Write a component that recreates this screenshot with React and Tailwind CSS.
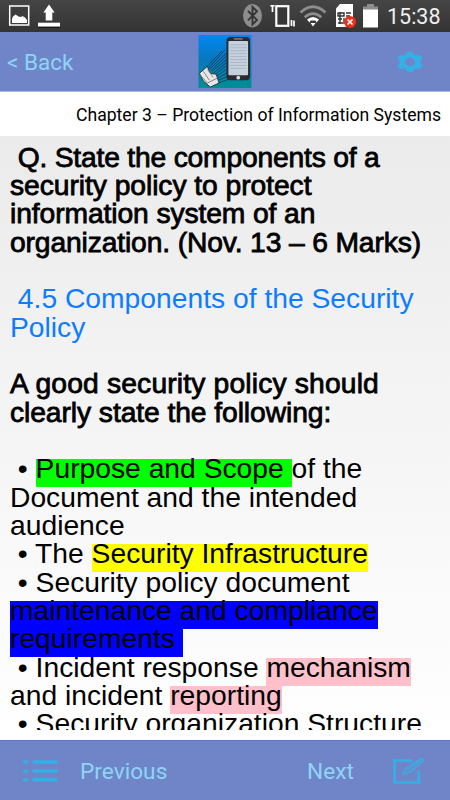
import React from 'react';
import clsx from 'clsx';

const StatusBar = () => (
  <div className="flex h-8 shrink-0 bg-gradient-to-b from-[#454545] to-[#343434]">
    <svg viewBox="0 0 385 32" className="h-8 w-[385px] shrink-0">
      {/* gallery */}
      <rect x="9.7" y="6" width="19" height="19" fill="#3d3d3d" stroke="#fff" strokeWidth="1.5" />
      <path d="M12 23v-4l1-2.500 2.500-2 3 2 2.500.5 1.500-1 2.500 1.500 2 2.500V23z" fill="#fff" />
      {/* upload */}
      <path d="M49 4.500l5.600 8h-2.300v8h-6.600v-8h-2.300z" fill="#fff" />
      <rect x="38" y="22.700" width="22" height="4" fill="#fff" />
      <path d="M38 27.300h22" stroke="#111" />
      {/* bluetooth */}
      <ellipse cx="252.500" cy="15.700" rx="9.500" ry="11.700" fill="#8d8d8d" />
      <path d="M248 11l9 9-4.500 4.500V7l4.500 4.300-9 9" fill="none" stroke="#353535" strokeWidth="1.900" />
      {/* vibrate */}
      <rect x="276.300" y="6.200" width="12" height="19.600" fill="#373737" stroke="#fff" strokeWidth="2.200" />
      <path d="M270.500 5.800h4M272.500 5.500v6.500M291.500 20v6M294 20.500v6" fill="none" stroke="#fff" strokeWidth="1.700" />
      {/* wifi */}
      <path d="M300.500 12.500q12.500-11.500 25 0M304.700 17.300q8.300-7.500 16.600 0" fill="none" stroke="#8d8d8d" strokeWidth="2.700" />
      <path d="M307 19.500q6-5 12 0l-2.500 3-1-2h-5l-1 2z" fill="#fff" />
      <path d="M310.500 23h5l-2.500 3.500z" fill="#fff" />
      {/* sim */}
      <path d="M336 8.500L340 4h13v23h-17z" fill="#fff" />
      <path d="M338 13h6v3h-6zM346 13h5M346 16h4M338 19h4M338 23h5M344 18v6M340 12v12" fill="none" stroke="#333" strokeWidth="1.400" />
      <circle cx="350" cy="22" r="6" fill="#ee3018" />
      <path d="M347.500 19.500l5 5M352.500 19.500l-5 5" stroke="#fff" strokeWidth="1.700" />
      {/* battery */}
      <path d="M363 10V6.500h4V4h7v2.500h4V10z" fill="#8d8d8d" />
      <rect x="363" y="9.500" width="15" height="18" fill="#fff" />
    </svg>
    <span className="ml-[2px] text-[21.500px] leading-[34px] text-[#f0f0f0]">15:38</span>
  </div>
);

const AppLogo = () => (
  <svg viewBox="0 0 54 54" className="h-[53px] w-[54px]">
    <defs>
      <linearGradient id="sky" x1="0" y1="0" x2="0" y2="1">
        <stop offset="0" stopColor="#0088f5" />
        <stop offset="0.450" stopColor="#0878bd" />
        <stop offset="1" stopColor="#008f91" />
      </linearGradient>
    </defs>
    <rect width="54" height="54" fill="url(#sky)" />
    <path
      d="M8 33L24 16M10 34L27 15M11 35L29 18M13 36L30 20M14 37L30 24M15 39L30 27M16 41L30 30M17 43L30 34M18 45L30 38M18 47L30 42M20 49L31 45"
      stroke="#073d68"
      strokeWidth="0.900"
    />
    <path d="M1 39l8-7 3 7 6 1 3 9-9 4-7-6z" fill="#e6e6e6" stroke="#263944" strokeWidth="1" />
    <path d="M2 41l7 8 10-5M5 37l6 9M9 35l6 8" fill="none" stroke="#858585" />
    <rect x="28.500" y="2" width="24" height="44" rx="4" fill="#2b2b2e" />
    <path d="M36 4h9" stroke="#aaa" />
    <rect x="30.500" y="6" width="20" height="35" rx="1" fill="#c5d1df" />
    <path d="M32 10h17M32 13h17M32 16h17M32 19h17M32 22h17M32 25h17M32 28h17M32 31h17M32 34h17" stroke="#a3b0c0" strokeWidth="0.800" />
    <circle cx="40.500" cy="43.500" r="1.900" fill="#ddd" />
  </svg>
);

const GearIcon = () => (
  <svg viewBox="0 0 26 22" className="h-[22px] w-[26px]">
    <path
      fillRule="evenodd"
      fill="#35b0e6"
      d="M10 1.500Q13-.5 16 1.500L17 4l3 .5Q24 3 25.500 7L23.500 9.500v3L25.500 15Q24 19 20 17.500L17 18l-1 2.500Q13 22.500 10 20.500L9 18l-3-.5Q2 19 .5 15L2.500 12.500v-3L.5 7Q2 3 6 4.500L9 4zM13 6.800a5 4.200 0 1 0 0 8.400a5 4.200 0 1 0 0-8.400z"
    />
  </svg>
);

const ListIcon = () => (
  <svg viewBox="0 0 36 24" className="h-6 w-9">
    <path d="M2.800 3h1.500M2.800 12h1.500M2.800 20.800h1.500M12 3h22M12 12h22M12 20.800h22" stroke="#35b0e6" strokeWidth="3.600" strokeLinecap="round" />
  </svg>
);

const EditIcon = () => (
  <svg viewBox="0 0 32 27" className="h-[27px] w-8" fill="none" stroke="#35b0e6">
    <path d="M20 3.500H1.500v22h24.300V14" strokeWidth="2.700" />
    <path d="M10 17l2.500-5L27 2.500q3-2 4 .5L17.500 14.500z" strokeWidth="1.500" />
    <path d="M24.500 4.500l3 2M14.500 13l11-8" strokeWidth="0.900" />
  </svg>
);

const Line = ({ bold, className, children }) => (
  <div className={clsx('h-[28.350px] whitespace-pre', bold && '[-webkit-text-stroke:0.800px_#000]', className)}>
    {children}
  </div>
);

const Mark = ({ className, children }) => (
  <span className={clsx('inline-block pb-[9px] leading-[19px]', className)}>{children}</span>
);

const App = () => (
  <div className="flex h-[800px] w-[450px] flex-col overflow-hidden font-[Roboto,sans-serif]">
    <StatusBar />
    <div className="flex h-[60px] shrink-0 items-center justify-between border-b border-[#a9b8e2] bg-[#6f85c7] pl-[7px] pr-[27px] text-[#8dd4f7]">
      <span className="w-[191px] pt-[3px] text-[22.500px]">&lt; Back</span>
      <div className="flex grow">
        <AppLogo />
      </div>
      <GearIcon />
    </div>
    <div className="flex h-11 shrink-0 items-center justify-end bg-white pr-[9px] pt-[2px] text-[17.580px] text-black">
      Chapter 3 – Protection of Information Systems
    </div>
    <div className="h-[604px] shrink-0 bg-gradient-to-b from-[#ebebeb] to-white">
      <div className="h-[594px] overflow-hidden pl-[10px] pt-[6.600px] font-['Liberation_Sans',Arial,sans-serif] text-[28.250px] leading-[28.350px] text-black">
        <Line bold className="tracking-[-0.200px]"> Q. State the components of a</Line>
        <Line bold className="tracking-[-0.060px]">security policy to protect</Line>
        <Line bold className="tracking-[-0.100px]">information system of an</Line>
        <Line bold className="tracking-[-0.140px]">organization. (Nov. 13 – 6 Marks)</Line>
        <Line />
        <Line className="text-[#0d7dff]"> 4.5 Components of the Security</Line>
        <Line className="text-[#0d7dff]">Policy</Line>
        <Line />
        <Line bold className="tracking-[0.160px]">A good security policy should</Line>
        <Line bold className="tracking-[-0.080px]">clearly state the following:</Line>
        <Line />
        <Line>
          {' • '}
          <Mark className="bg-[#00ff00]">{'Purpose and Scope '}</Mark>
          of the
        </Line>
        <Line>Document and the intended</Line>
        <Line>audience</Line>
        <Line>
          {' • The '}
          <Mark className="bg-[#ffff00]">Security Infrastructure</Mark>
        </Line>
        <Line>{' • Security policy document'}</Line>
        <Line>
          <Mark className="bg-[#0000ff]">maintenance and compliance</Mark>
        </Line>
        <Line>
          <Mark className="bg-[#0000ff]">{'requirements '}</Mark>
        </Line>
        <Line>
          {' • Incident response '}
          <Mark className="bg-[#ffc0cb]">mechanism</Mark>
        </Line>
        <Line>
          {'and incident '}
          <Mark className="bg-[#ffc0cb]">reporting</Mark>
        </Line>
        <Line>{' • Security organization Structure'}</Line>
      </div>
    </div>
    <div className="flex h-[60px] shrink-0 items-center border-t border-[#6078bf] bg-[#6f85c7] pl-[22px] text-[22.700px] text-[#8dd4f7]">
      <ListIcon />
      <span className="ml-[22px] w-[227px] pt-[3px]">Previous</span>
      <span className="w-[86px] pt-[3px]">Next</span>
      <EditIcon />
    </div>
  </div>
);

export default App;
